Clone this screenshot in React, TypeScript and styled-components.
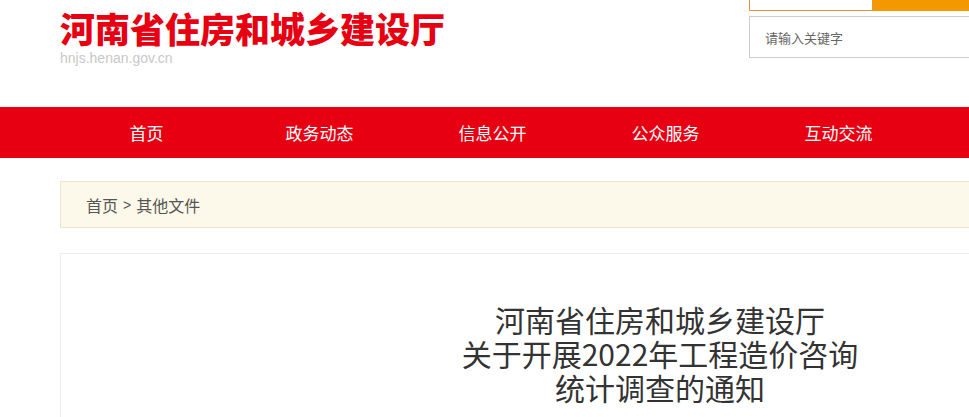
import styled, { createGlobalStyle } from "styled-components";

const Global = createGlobalStyle`
  html, body {
    margin: 0;
    padding: 0;
    background: #fff;
    font-family: "Liberation Sans", "Noto Sans CJK SC", sans-serif;
  }
`;

/* header */
const Page = styled.div`
  width: 1320px;
`;

const Container = styled.div`
  width: 1200px;
  margin-left: 60px;
`;

const Header = styled(Container)`
  height: 107px;
  display: flex;
  justify-content: space-between;
  align-items: flex-start;
`;

const Logo = styled.div`
  padding-top: 7px;
`;

const SiteName = styled.h1`
  margin: 0;
  font-family: "Noto Sans CJK SC", sans-serif;
  font-size: 35px;
  font-weight: 900;
  line-height: 42px;
  color: #e60012;
`;

const Domain = styled.div`
  font-family: "Liberation Sans", Arial, sans-serif;
  font-size: 14px;
  color: #c8c8c8;
  line-height: 14px;
  margin-top: 2px;
`;

const SearchArea = styled.div`
  position: absolute;
  left: 749px;
  top: 0;
  width: 460px;
  display: flex;
  flex-direction: column;
  gap: 5px;
`;

const SearchRow = styled.div`
  display: flex;
  margin-top: -20px;
  height: 31px;
`;

const SearchInput = styled.div`
  width: 122px;
  border: 1px solid #e8923a;
  background: #fff;
`;

const SearchButton = styled.div`
  flex: 1;
  background: #f39800;
`;

const KeywordBox = styled.div`
  height: 40px;
  border: 1px solid #ccc;
  display: flex;
  align-items: center;
  padding-left: 15px;
  font-family: "Noto Sans CJK SC", sans-serif;
  font-size: 13px;
  color: #666;
  background: #fff;
`;

/* nav */
const NavBar = styled.nav`
  background: #e60012;
  height: 51px;
`;

const NavList = styled(Container)`
  display: flex;
  height: 100%;
`;

const NavItem = styled.a`
  width: 173px;
  display: flex;
  align-items: center;
  justify-content: center;
  color: #fff;
  font-family: "Noto Sans CJK SC", sans-serif;
  font-size: 17px;
  text-decoration: none;
`;

/* breadcrumb */
const Crumbs = styled(Container)`
  margin-top: 23px;
  height: 47px;
  box-sizing: border-box;
  border: 1px solid #efe6cc;
  background: #fdf9ea;
  display: flex;
  align-items: center;
  padding-left: 25px;
  font-family: "Noto Sans CJK SC", sans-serif;
  font-size: 16px;
  color: #555;
`;

const Sep = styled.span`
  font-family: "Liberation Sans", sans-serif;
  font-size: 14px;
  margin: 0 5px;
`;

/* article */
const Article = styled(Container)`
  margin-top: 25px;
  border: 1px solid #ececec;
  border-bottom: none;
  box-sizing: border-box;
  padding-top: 48px;
  min-height: 200px;
`;

const Title = styled.h2`
  margin: 0;
  text-align: center;
  font-family: "Noto Sans CJK SC", sans-serif;
  font-weight: 400;
  font-size: 30px;
  line-height: 34px;
  color: #333;
`;

const Wrap = styled.div`
  position: relative;
`;

export default function App() {
  const nav = ["首页", "政务动态", "信息公开", "公众服务", "互动交流"];
  return (
    <Page>
      <Global />
      <Wrap>
        <Header>
          <Logo>
            <SiteName>河南省住房和城乡建设厅</SiteName>
            <Domain>hnjs.henan.gov.cn</Domain>
          </Logo>
        </Header>
        <SearchArea>
          <SearchRow>
            <SearchInput />
            <SearchButton />
          </SearchRow>
          <KeywordBox>请输入关键字</KeywordBox>
        </SearchArea>
      </Wrap>
      <NavBar>
        <NavList>
          {nav.map((n) => (
            <NavItem key={n} href="#">
              {n}
            </NavItem>
          ))}
        </NavList>
      </NavBar>
      <Crumbs>
        首页<Sep>&gt;</Sep>其他文件
      </Crumbs>
      <Article>
        <Title>
          河南省住房和城乡建设厅
          <br />
          关于开展2022年工程造价咨询
          <br />
          统计调查的通知
        </Title>
      </Article>
    </Page>
  );
}
